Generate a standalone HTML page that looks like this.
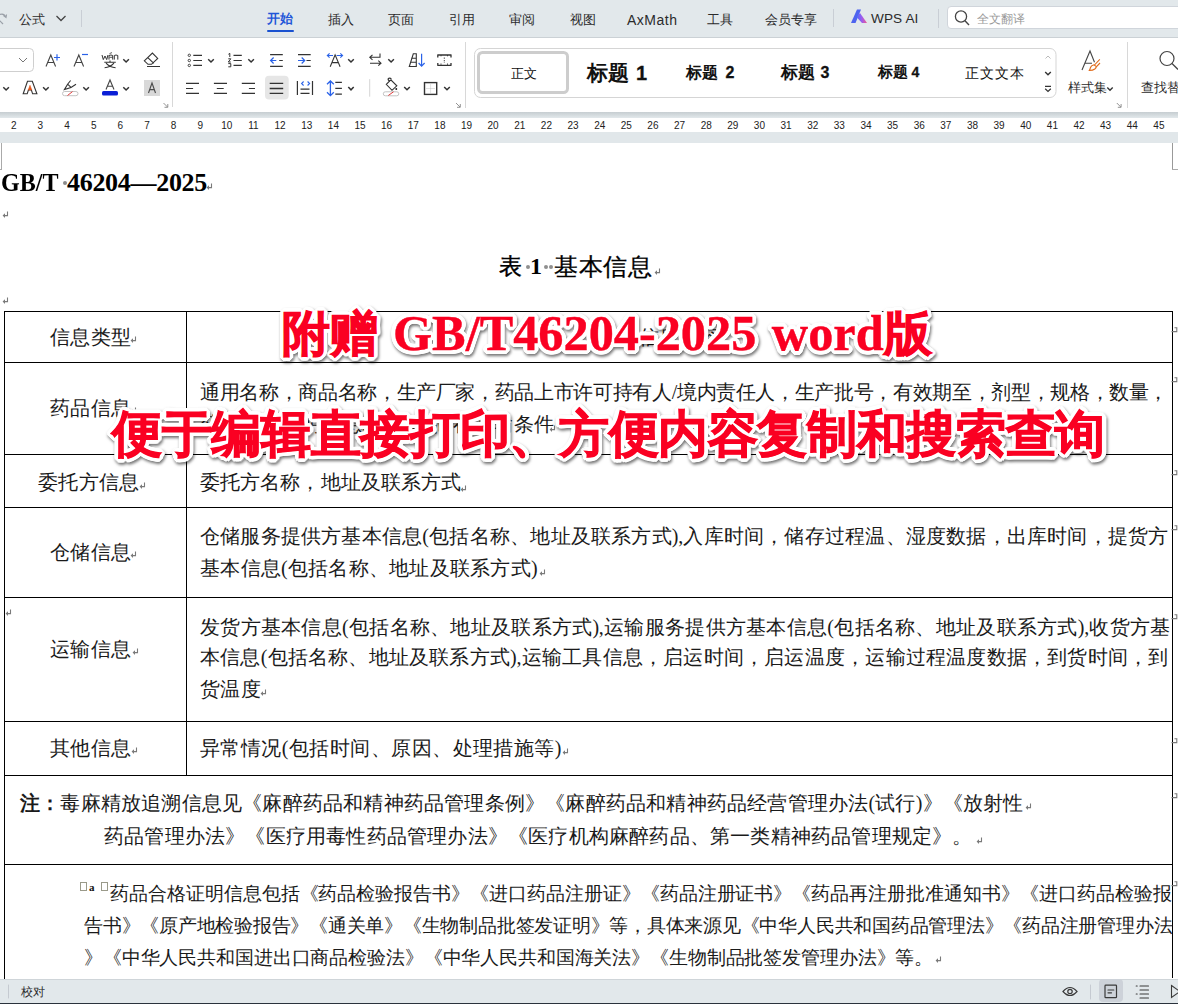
<!DOCTYPE html>
<html><head><meta charset="utf-8">
<style>
*{margin:0;padding:0;box-sizing:border-box}
html,body{width:1178px;height:1004px;overflow:hidden;background:#fff;font-family:"Liberation Sans",sans-serif}
.a{position:absolute}
#top{left:0;top:0;width:1178px;height:38px;background:#e2e8eb;border-bottom:1px solid #cbd1d5}
#rib{left:0;top:38px;width:1178px;height:74px;background:#fff}
#s1{left:0;top:112px;width:1178px;height:6px;background:linear-gradient(#c6cdd1,#e2e8eb)}
#ruler{left:0;top:118px;width:1178px;height:14px;background:#fff}
#s2{left:0;top:132px;width:1178px;height:11px;background:#e1e7ea}
#doc{left:0;top:143px;width:1178px;height:835px;background:#fff}
#status{left:0;top:979px;width:1178px;height:24px;background:#e2e8eb;border-top:1px solid #cfd5d9}
.tab{position:absolute;top:10.5px;font-size:13px;color:#2b2b2b;line-height:18px;white-space:nowrap}
.rn{position:absolute;top:118.5px;font-size:10px;color:#222;line-height:14px;width:20px;text-align:center;margin-left:0.8px}
.cjk{font-family:"Liberation Serif",serif}
.t{position:absolute;font-family:"Liberation Serif",serif;font-size:19.5px;color:#1a1a1a;line-height:22px;white-space:nowrap}
.j{text-align:justify;text-align-last:justify}
.hl{position:absolute;background:#000}
.rm{position:absolute;font-size:10px;color:#777;font-family:"Liberation Sans",sans-serif}
.ov{position:absolute;font-family:"Liberation Serif",serif;font-weight:bold;white-space:nowrap;line-height:60px}
.ovb{color:#fff;-webkit-text-stroke:1px #fff;text-shadow:4.20px 0.00px 0 #fff,3.99px 1.30px 0 #fff,3.40px 2.47px 0 #fff,2.47px 3.40px 0 #fff,1.30px 3.99px 0 #fff,0.00px 4.20px 0 #fff,-1.30px 3.99px 0 #fff,-2.47px 3.40px 0 #fff,-3.40px 2.47px 0 #fff,-3.99px 1.30px 0 #fff,-4.20px 0.00px 0 #fff,-3.99px -1.30px 0 #fff,-3.40px -2.47px 0 #fff,-2.47px -3.40px 0 #fff,-1.30px -3.99px 0 #fff,-0.00px -4.20px 0 #fff,1.30px -3.99px 0 #fff,2.47px -3.40px 0 #fff,3.40px -2.47px 0 #fff,3.99px -1.30px 0 #fff,2.50px 0.00px 0 #fff,2.02px 1.47px 0 #fff,0.77px 2.38px 0 #fff,-0.77px 2.38px 0 #fff,-2.02px 1.47px 0 #fff,-2.50px 0.00px 0 #fff,-2.02px -1.47px 0 #fff,-0.77px -2.38px 0 #fff,0.77px -2.38px 0 #fff,2.02px -1.47px 0 #fff;filter:drop-shadow(1px 2px 1.8px rgba(0,0,0,.55))}
.ovf{color:#fa0022;-webkit-text-stroke:1px #fa0022}
.ovf span{-webkit-text-stroke:0.4px #fa0022}
</style></head><body>
<div id="top" class="a"></div>
<div id="rib" class="a"></div>
<div id="s1" class="a"></div>
<div id="ruler" class="a"></div>
<div id="s2" class="a"></div>
<div id="doc" class="a"></div>
<div id="status" class="a"></div>

<!-- top bar -->
<div class="tab" style="left:19px">公式</div>
<div class="tab" style="left:267px;top:10px;color:#1f56d8;font-weight:bold">开始</div>
<div class="a" style="left:267px;top:30px;width:27px;height:2px;background:#1a52d0;border-radius:1px"></div>
<div class="tab" style="left:328px">插入</div>
<div class="tab" style="left:388px">页面</div>
<div class="tab" style="left:449px">引用</div>
<div class="tab" style="left:509px">审阅</div>
<div class="tab" style="left:570px">视图</div>
<div class="tab" style="left:627px;font-size:14px;top:11px;letter-spacing:0.5px">AxMath</div>
<div class="tab" style="left:707px">工具</div>
<div class="tab" style="left:765px">会员专享</div>
<div class="tab" style="left:871px;font-size:13.6px;top:10px;letter-spacing:0.1px">WPS AI</div>
<div class="a" style="left:947px;top:6px;width:240px;height:23px;background:#fff;border:1px solid #d0d5db;border-radius:4px"></div>
<div class="tab" style="left:977px;top:9.5px;color:#999;font-size:12px">全文翻译</div>
<svg class="a" style="left:0;top:0" width="1178" height="112" viewBox="0 0 1178 112">
<g fill="none" stroke="#333" stroke-width="1.2" stroke-linecap="butt" stroke-linejoin="miter">
<!-- top bar -->
<path d="M0 14.5 Q4 13 5.5 17 M3.5 15.5 L6 17.5 L6.5 14.5" stroke="#9aa0a8"/>
<path d="M-1 20 L3 24" stroke="#9aa0a8"/>
<path d="M56.5 16 L61 20.5 L65.5 16" stroke="#444" stroke-width="1.3"/>
<path d="M81.5 10 V27 M833.5 9 V27 M938.5 9 V28" stroke="#c9ced5" stroke-width="1"/>
<circle cx="961" cy="16.5" r="5.6" stroke="#444" stroke-width="1.3"/>
<path d="M965 20.8 L969 25" stroke="#444" stroke-width="1.4"/>
<!-- font group row1 -->
<rect x="-6" y="48.5" width="39.5" height="23" rx="4" stroke="#cfcfcf" stroke-width="1"/>
<path d="M19 58 L23 62 L27 58" stroke="#777" stroke-width="1"/>
<path d="M46 66.5 L50.8 55 L55.6 66.5 M47.6 62.5 H54" stroke="#444" stroke-width="1.1"/>
<path d="M54 57.5 H60 M57 54.3 V60.5" stroke="#2a62e8" stroke-width="1.2"/>
<path d="M74 66.5 L78.8 55 L83.6 66.5 M75.6 62.5 H82" stroke="#444" stroke-width="1.1"/>
<path d="M82 54.5 H88" stroke="#2a62e8" stroke-width="1.2"/>
<path d="M102 55 L103.3 59.6 L105 56 L106.7 59.6 L108 55 M109 59.6 V55.5 Q111 54.5 112.7 55.5 V59.6 M114.3 59.6 V55.5 Q116 54.5 117.8 55.5 V59.6" stroke-width="1"/>
<path d="M109.5 53.6 L112 52.6 M109.5 57.3 H112.7" stroke-width="0.8"/>
<path d="M104.3 62.3 H115.8 M110 60.5 V62 M106 63.2 Q110 67.5 115.6 67.8 M114 63.2 Q110 67.5 104.6 67.8" stroke-width="1.1"/>
<path d="M123.3 59.3 L126.1 62 L128.9 59.3" stroke-width="1.5"/>
<path d="M144.3 60.8 L152.4 53 L157.7 58.4 L151.5 64.3 H148 Z M147.8 57.6 L153.8 63.4 M147 66.5 H160" stroke-width="1.1"/>
<!-- font group row2 -->
<path d="M3.3 87.2 L6.1 90 L8.9 87.2" stroke-width="1.5"/>
<path d="M23.2 93.8 L27.5 81.2 H32.3 L36.9 93.8 H32.6 L31.4 90 H28.4 L27.2 93.8 Z" stroke-width="1.1"/>
<path d="M28.2 90 L30 85.2 L31.8 90 Z" fill="#e0561c" stroke="#e0561c" stroke-width="0.5"/>
<path d="M43.1 87.2 L45.9 90 L48.7 87.2" stroke-width="1.5"/>
<path d="M70.6 80.5 L67.6 84.2 L64.4 89.6 L71 87.4 L76 84.2 M67.6 84.2 L71 87.4" stroke-width="1.1"/>
<rect x="62.5" y="91.5" width="15.5" height="4.2" rx="2.1" stroke="#c4c4c4" stroke-width="1"/>
<path d="M67.5 95.5 L72.5 91.6" stroke="#e23c3c" stroke-width="1"/>
<path d="M83.3 87.2 L86.1 90 L88.9 87.2" stroke-width="1.5"/>
<path d="M106 89.5 L110 80 L114 89.5 M107.4 86.3 H112.6" stroke="#444" stroke-width="1.1"/>
<rect x="102" y="91" width="16" height="4.6" rx="1.6" fill="#0a1fd6" stroke="none"/>
<path d="M123.3 87.2 L126.1 90 L128.9 87.2" stroke-width="1.5"/>
<rect x="144" y="80" width="16" height="16" fill="#d9d9d9" stroke="none"/>
<path d="M148.5 93 L152 83 L155.5 93 M149.6 89.6 H154.4" stroke="#4a4a4a" stroke-width="1.1"/>
<path d="M163.5 103 L167.5 107 M164.5 107.3 H167.8 V104" stroke="#888" stroke-width="0.9"/>
<path d="M172.5 42 V107 M465.5 42 V108 M1127.5 42 V108" stroke="#d8d8d8" stroke-width="1"/>
<!-- para row1 -->
<circle cx="189.3" cy="55.3" r="1.2" stroke-width="0.9"/><circle cx="189.3" cy="60.5" r="1.2" stroke-width="0.9"/><circle cx="189.3" cy="65.4" r="1.2" stroke-width="0.9"/>
<path d="M193.3 55.3 H202 M193.3 60.5 H202 M193.3 65.4 H202"/>
<path d="M208.2 59.3 L211 62 L213.8 59.3" stroke-width="1.5"/>
<path d="M228.4 54.3 L229.8 53.3 V57 M228.3 58.8 H230.8 L228.3 62 H230.8 M228.3 63.6 H230.8 V66.8 H228.3" stroke-width="1"/>
<path d="M233.5 55.3 H241.8 M233.5 60.5 H241.8 M233.5 65.4 H241.8"/>
<path d="M248.3 59.3 L251.1 62 L253.9 59.3" stroke-width="1.5"/>
<path d="M270.1 54.6 H282.8 M270.1 66.4 H282.8 M279.2 60.5 H282.8"/>
<path d="M270.8 60.5 H276.3 M273.6 57.5 L270.6 60.5 L273.6 63.5" stroke="#2a62e8" stroke-width="1.2"/>
<path d="M298 54.6 H310.7 M298 66.4 H310.7 M306.5 60.5 H310.7"/>
<path d="M298 60.5 H304.5 M301.7 57.5 L304.7 60.5 L301.7 63.5" stroke="#2a62e8" stroke-width="1.2"/>
<path d="M330.2 66.8 L335.1 54.9 L340.1 66.8 M331.8 62.6 H338.4" stroke-width="1.1"/>
<path d="M327.3 55.5 H333 M329.6 53.3 L327.3 55.5 L329.6 57.7 M336.6 55.5 H342.6 M340.3 53.3 L342.6 55.5 L340.3 57.7" stroke="#2a62e8" stroke-width="1.1"/>
<path d="M348.2 59.3 L351 62 L353.8 59.3" stroke-width="1.5"/>
<path d="M380 53.5 V57.3 H370 M372.5 54.8 L369.8 57.3 L372.5 59.8 M370 63.2 H380.8 M378.3 60.7 L381 63.2 L378.3 65.7" stroke-width="1.1"/>
<path d="M388.3 59.3 L391.1 62 L393.9 59.3" stroke-width="1.5"/>
<path d="M409.3 66.5 L413.3 53.8 H416.3 V66.5 Z M411.2 58.3 H416.3 M410.2 62.3 H416.3" stroke-width="1.1"/>
<path d="M421.6 53.8 V66 M418.6 63 L421.6 66.2 L424.6 63" stroke="#2a62e8" stroke-width="1.2"/>
<path d="M437.3 55 H451.5 M437.3 65.3 H451.5 M437.8 55 V57.5 M451 55 V57.5 M437.8 63 V65.3 M451 63 V65.3" stroke-width="1.3"/>
<path d="M441 55 V56.8 M447.5 55 V56.8 M441 63.5 V65.3 M447.5 63.5 V65.3 M444.3 57.5 V63" stroke-width="0.9" stroke-dasharray="1.3 1.2"/>
<!-- para row2 -->
<path d="M186 83.3 H199 M186 88.5 H193.1 M186 93.4 H199"/>
<path d="M213.9 83.3 H227 M216.8 88.5 H223.7 M213.9 93.4 H227"/>
<path d="M241.8 83.3 H255 M248.9 88.5 H255 M241.8 93.4 H255"/>
<rect x="265" y="75.8" width="23.7" height="23.8" rx="4" fill="#e6e6e6" stroke="none"/>
<path d="M269.7 83.3 H283.2 M269.7 88.5 H283.2 M269.7 93.4 H283.2" stroke-width="1.3"/>
<path d="M297.4 81 V95 M312.5 81 V95 M300.5 89.2 H309.5 M300.5 93.4 H309.5" stroke-width="1.2"/>
<path d="M303.6 81.5 L301.6 83.5 L303.6 85.5 M307.6 81.5 L309.6 83.5 L307.6 85.5" stroke="#2a62e8" stroke-width="1.1"/>
<path d="M330.4 81.3 V95.3 M327 84.3 L330.4 81 L333.8 84.3 M327 92.3 L330.4 95.6 L333.8 92.3" stroke="#2a62e8" stroke-width="1.3"/>
<path d="M335.3 82.3 H341.9 M335.3 88.3 H341.9 M335.3 94.1 H341.9" stroke-width="1.2"/>
<path d="M348.3 87 L351 89.8 L353.7 87" stroke-width="1.5"/>
<path d="M369.7 79.1 V96.7" stroke="#d6d6d6" stroke-width="1"/>
<path d="M386.3 84.3 L390.8 79.8 L396.8 85.8 L392 90.3 Z M390 81.5 Q387.5 80 388.3 78.5 Q390 77.3 391.5 79.3" stroke-width="1.1"/>
<path d="M396.3 88 V90" stroke-width="1.6"/>
<rect x="383.3" y="91.8" width="15.5" height="4" rx="2" stroke="#c4c4c4" stroke-width="1"/>
<path d="M388.3 95.5 L393.5 91.8" stroke="#e23c3c" stroke-width="1"/>
<path d="M404.2 87 L407 89.8 L409.8 87" stroke-width="1.5"/>
<rect x="424.5" y="82.6" width="12.2" height="11.8" stroke-width="1.4"/>
<path d="M430.6 84.5 V93 M426.5 88.5 H435" stroke="#aaa" stroke-width="0.7" stroke-dasharray="1 1"/>
<path d="M444.2 87 L447 89.8 L449.8 87" stroke-width="1.5"/>
<path d="M456 103 L460 107 M457 107.3 H460.3 V104" stroke="#888" stroke-width="0.9"/>
<!-- styles -->
<rect x="474.5" y="48.5" width="581.5" height="49" rx="6" stroke="#d5d5d5" stroke-width="1"/>
<rect x="478.5" y="52.5" width="89" height="40" rx="4" stroke="#cdcdcd" stroke-width="3"/>
<path d="M1045.5 58.5 L1048 56 L1050.5 58.5" stroke="#bbb" stroke-width="1"/>
<path d="M1045.2 72 L1048 74.7 L1050.8 72" stroke="#333" stroke-width="1.4"/>
<path d="M1045 86.3 H1051 M1045.2 88.8 L1048 91.5 L1050.8 88.8" stroke="#333" stroke-width="1.2"/>
<path d="M1082 70 L1090 51 L1094.5 62.3 M1084.8 63.3 H1092" stroke="#444" stroke-width="1.1"/>
<path d="M1094.5 65 L1099.8 59.3 M1096.3 66.8 L1100 63" stroke="#e06c1c" stroke-width="1.1"/><path d="M1094 64.8 Q1091 65.5 1090.5 67.5 Q1090 69.5 1089.3 70.5 Q1093 70.5 1094.8 69 Q1096.5 67.5 1096.3 66.5 Z" stroke="#e06c1c" stroke-width="1.1" fill="none"/>
<path d="M1107.3 87.5 L1110 90.2 L1112.7 87.5" stroke-width="1.4"/>
<path d="M1116.8 103 L1120.8 107 M1117.8 107.3 H1121.1 V104" stroke="#888" stroke-width="0.9"/>
<circle cx="1167" cy="58.5" r="7" stroke="#444" stroke-width="1.2"/>
<path d="M1172 63.5 L1178 69.5" stroke="#444" stroke-width="1.3"/>
</g>
<defs><linearGradient id="wg" x1="0" y1="0" x2="1" y2="0"><stop offset="0" stop-color="#4b6cf7"/><stop offset="0.5" stop-color="#9b5cf0"/><stop offset="1" stop-color="#f25a8c"/></linearGradient></defs>
<path d="M851 23 L857 9.5 H861 L855.5 23 Z" fill="#4d63ef"/>
<path d="M856.5 17 L860 13 L867 23 H862 Z" fill="url(#wg)"/>
</svg>



<div class="tab" style="left:511px;top:65px;font-size:13px;color:#111">正文</div>
<div class="a cjk" style="left:587px;top:61px;font-size:21px;line-height:24px;font-weight:bold;color:#111;white-space:nowrap">标题</div><div style="left:636px;top:61px;font-size:20px;line-height:24px;font-family:'Liberation Sans',sans-serif;font-weight:bold;color:#111;position:absolute;-webkit-text-stroke:0.3px #111">1</div>
<div class="a cjk" style="left:686px;top:63px;font-size:16px;line-height:20px;font-weight:bold;color:#111;white-space:nowrap">标题</div><div style="left:725.5px;top:62.5px;font-size:16px;line-height:20px;font-family:'Liberation Sans',sans-serif;font-weight:bold;color:#111;position:absolute;-webkit-text-stroke:0.3px #111">2</div>
<div class="a cjk" style="left:781px;top:63px;font-size:16.5px;line-height:20px;font-weight:bold;color:#111;white-space:nowrap">标题</div><div style="left:820.5px;top:62.5px;font-size:16px;line-height:20px;font-family:'Liberation Sans',sans-serif;font-weight:bold;color:#111;position:absolute;-webkit-text-stroke:0.3px #111">3</div>
<div class="a cjk" style="left:878px;top:63px;font-size:14.5px;line-height:18px;font-weight:bold;color:#111;white-space:nowrap">标题</div><div style="left:911.5px;top:63px;font-size:14px;line-height:18px;font-family:'Liberation Sans',sans-serif;font-weight:bold;color:#111;position:absolute;-webkit-text-stroke:0.3px #111">4</div>
<div class="a cjk" style="left:965px;top:63.5px;font-size:14.4px;line-height:18px;color:#111;white-space:nowrap;letter-spacing:1px">正文文本</div>
<div class="tab" style="left:1068px;top:79px;font-size:12.5px;letter-spacing:0.1px">样式集</div>
<div class="tab" style="left:1141px;top:79px;font-size:13px">查找替换</div>

<!-- ruler numbers -->
<div class="rn" style="left:3.0px">2</div><div class="rn" style="left:29.6px">3</div><div class="rn" style="left:56.3px">4</div><div class="rn" style="left:82.9px">5</div><div class="rn" style="left:109.5px">6</div><div class="rn" style="left:136.2px">7</div><div class="rn" style="left:162.8px">8</div><div class="rn" style="left:189.4px">9</div><div class="rn" style="left:216.0px">10</div><div class="rn" style="left:242.7px">11</div><div class="rn" style="left:269.3px">12</div><div class="rn" style="left:295.9px">13</div><div class="rn" style="left:322.6px">14</div><div class="rn" style="left:349.2px">15</div><div class="rn" style="left:375.8px">16</div><div class="rn" style="left:402.4px">17</div><div class="rn" style="left:429.1px">18</div><div class="rn" style="left:455.7px">19</div><div class="rn" style="left:482.3px">20</div><div class="rn" style="left:509.0px">21</div><div class="rn" style="left:535.6px">22</div><div class="rn" style="left:562.2px">23</div><div class="rn" style="left:588.9px">24</div><div class="rn" style="left:615.5px">25</div><div class="rn" style="left:642.1px">26</div><div class="rn" style="left:668.8px">27</div><div class="rn" style="left:695.4px">28</div><div class="rn" style="left:722.0px">29</div><div class="rn" style="left:748.6px">30</div><div class="rn" style="left:775.3px">31</div><div class="rn" style="left:801.9px">32</div><div class="rn" style="left:828.5px">33</div><div class="rn" style="left:855.2px">34</div><div class="rn" style="left:881.8px">35</div><div class="rn" style="left:908.4px">36</div><div class="rn" style="left:935.0px">37</div><div class="rn" style="left:961.7px">38</div><div class="rn" style="left:988.3px">39</div><div class="rn" style="left:1014.9000000000001px">40</div><div class="rn" style="left:1041.6px">41</div><div class="rn" style="left:1068.2px">42</div><div class="rn" style="left:1094.8px">43</div><div class="rn" style="left:1121.5px">44</div><div class="rn" style="left:1148.1px">45</div>


<!-- document -->
<div class="a" style="left:1px;top:143px;width:1px;height:27px;background:#aaa"></div><div class="a" style="left:0px;top:169px;width:1px;height:1px;background:#aaa"></div>
<div class="a" style="left:1172px;top:143px;width:1px;height:27px;background:#999"></div><div class="a" style="left:1172px;top:169px;width:6px;height:1px;background:#aaa"></div>
<div class="a" style="left:1px;top:168px;font-family:'Liberation Serif',serif;font-weight:bold;font-size:26px;line-height:30px;color:#000;white-space:nowrap;transform:scaleX(0.925);transform-origin:0 0">GB/T</div>
<div class="a" style="left:62.5px;top:180.5px;width:4px;height:4px;border-radius:2px;background:#8a8a8a"></div>
<div class="a" style="left:67px;top:168px;font-family:'Liberation Serif',serif;font-weight:bold;font-size:26px;line-height:30px;color:#000;white-space:nowrap;letter-spacing:-0.3px">46204—2025</div>

<div class="t" style="left:499px;top:255px;font-size:23px;line-height:24px;color:#000;-webkit-text-stroke:0.4px #000">表</div>
<div class="a" style="left:525.5px;top:264.5px;width:4px;height:4px;border-radius:2px;background:#8f8f8f"></div>
<div class="a" style="left:530px;top:252px;font-family:'Liberation Serif',serif;font-weight:bold;font-size:24px;line-height:28px;color:#000">1</div>
<div class="a" style="left:543.5px;top:264.5px;width:4px;height:4px;border-radius:2px;background:#8f8f8f"></div>
<div class="a" style="left:548.5px;top:264.5px;width:4px;height:4px;border-radius:2px;background:#8f8f8f"></div>
<div class="t" style="left:554px;top:255px;font-size:24px;line-height:24px;color:#000;letter-spacing:0.6px;-webkit-text-stroke:0.3px #000">基本信息</div>

<!-- table lines -->
<div class="hl" style="left:4px;top:311px;width:1169px;height:1px"></div>
<div class="hl" style="left:4px;top:362px;width:1169px;height:1px"></div>
<div class="hl" style="left:4px;top:454px;width:1169px;height:1px"></div>
<div class="hl" style="left:4px;top:507px;width:1169px;height:1px"></div>
<div class="hl" style="left:4px;top:597px;width:1169px;height:1px"></div>
<div class="hl" style="left:4px;top:721px;width:1169px;height:1px"></div>
<div class="hl" style="left:4px;top:775px;width:1169px;height:1px"></div>
<div class="hl" style="left:4px;top:864px;width:1169px;height:1px"></div>
<div class="hl" style="left:4px;top:311px;width:1px;height:668px"></div>
<div class="hl" style="left:186px;top:311px;width:1px;height:465px"></div>
<div class="hl" style="left:1172px;top:311px;width:1px;height:667px"></div>

<!-- left column -->
<div class="t" style="left:50px;top:326.2px;font-size:20px;letter-spacing:0.3px">信息类型</div>
<div class="t" style="left:50px;top:397.2px;font-size:20px;letter-spacing:0.3px">药品信息</div>
<div class="t" style="left:38px;top:471.0px;font-size:20px;letter-spacing:0.3px">委托方信息</div>
<div class="t" style="left:50px;top:540.8px;font-size:20px;letter-spacing:0.3px">仓储信息</div>
<div class="t" style="left:50px;top:638.3px;font-size:20px;letter-spacing:0.3px">运输信息</div>
<div class="t" style="left:50px;top:737.0px;font-size:20px;letter-spacing:0.3px">其他信息</div>
<div class="t" style="left:639px;top:326.2px;font-size:20px;letter-spacing:0.3px">信息内容</div>
<div class="t j" style="left:200px;top:380.8px;font-size:20px;letter-spacing:-0.5px;width:968px">通用名称，商品名称，生产厂家，药品上市许可持有人/境内责任人，生产批号，有效期至，剂型，规格，数量，</div>
<div class="t" style="left:200px;top:413.2px;font-size:20px;letter-spacing:0.3px">药品合格证明信息a，药品储存运输条件</div>
<div class="t" style="left:200px;top:471.4px;font-size:20px;letter-spacing:0.1px">委托方名称，地址及联系方式</div>
<div class="t j" style="left:200px;top:524.5px;font-size:20px;letter-spacing:-0.3px;width:968px">仓储服务提供方基本信息(包括名称、地址及联系方式),入库时间，储存过程温、湿度数据，出库时间，提货方</div>
<div class="t" style="left:200px;top:556.9px;font-size:20px;letter-spacing:0.25px">基本信息(包括名称、地址及联系方式)</div>
<div class="t j" style="left:200px;top:615.8px;font-size:20px;letter-spacing:-0.3px;width:970px">发货方基本信息(包括名称、地址及联系方式),运输服务提供方基本信息(包括名称、地址及联系方式),收货方基</div>
<div class="t j" style="left:200px;top:646.2px;font-size:20px;letter-spacing:-0.3px;width:968px">本信息(包括名称、地址及联系方式),运输工具信息，启运时间，启运温度，运输过程温度数据，到货时间，到</div>
<div class="t" style="left:200px;top:678.1px;font-size:20px;letter-spacing:0.3px">货温度</div>
<div class="t" style="left:200px;top:737.0px;font-size:20px;letter-spacing:0.45px">异常情况(包括时间、原因、处理措施等)</div>
<div class="t" style="left:20px;top:792.0px;font-size:20px;letter-spacing:0.2px"><b>注：</b>毒麻精放追溯信息见《麻醉药品和精神药品管理条例》《麻醉药品和精神药品经营管理办法(试行)》《放射性</div>
<div class="t" style="left:104px;top:824.7px;font-size:20px;letter-spacing:0.2px">药品管理办法》《医疗用毒性药品管理办法》《医疗机构麻醉药品、第一类精神药品管理规定》。</div>
<div class="t j" style="left:110px;top:882.5px;font-size:19px;letter-spacing:-0.5px;width:1061px">药品合格证明信息包括《药品检验报告书》《进口药品注册证》《药品注册证书》《药品再注册批准通知书》《进口药品检验报</div>
<div class="t j" style="left:84px;top:914.7px;font-size:19px;letter-spacing:-0.5px;width:1088px">告书》《原产地检验报告》《通关单》《生物制品批签发证明》等，具体来源见《中华人民共和国药品管理法》《药品注册管理办法</div>
<div class="t" style="left:84px;top:947.1px;font-size:19px;letter-spacing:-0.13px">》《中华人民共和国进出口商品检验法》《中华人民共和国海关法》《生物制品批签发管理办法》等。</div>
<!-- fn prefix -->
<div class="a" style="left:80px;top:882px;width:7px;height:9px;border:1px solid #9a9a8a"></div>
<div class="a" style="left:89px;top:880px;font-family:'Liberation Serif',serif;font-weight:bold;font-size:11px;line-height:14px;color:#111">a</div>
<div class="a" style="left:101px;top:882px;width:7px;height:9px;border:1px solid #9a9a8a"></div>

<!-- marks -->
<svg class="a" style="left:0;top:0" width="1178" height="1004"><g stroke="#7a7a7a" stroke-width="1.1"><path d="M211.5 183.5 V187.6 H208" fill="none"/><path d="M206.6 187.6 L209 185.2 L209 190 Z" fill="#7a7a7a" stroke="none"/><path d="M7.5 211.5 V215.6 H4" fill="none"/><path d="M2.6 215.6 L5 213.2 L5 218 Z" fill="#7a7a7a" stroke="none"/><path d="M659.5 268.5 V272.6 H656" fill="none"/><path d="M654.6 272.6 L657 270.2 L657 275 Z" fill="#7a7a7a" stroke="none"/><path d="M7.5 297.5 V301.6 H4" fill="none"/><path d="M2.6 301.6 L5 299.2 L5 304 Z" fill="#7a7a7a" stroke="none"/><path d="M135.5 336.5 V340.6 H132" fill="none"/><path d="M130.6 340.6 L133 338.2 L133 343 Z" fill="#7a7a7a" stroke="none"/><path d="M135.5 407.5 V411.6 H132" fill="none"/><path d="M130.6 411.6 L133 409.2 L133 414 Z" fill="#7a7a7a" stroke="none"/><path d="M144.5 482.5 V486.6 H141" fill="none"/><path d="M139.6 486.6 L142 484.2 L142 489 Z" fill="#7a7a7a" stroke="none"/><path d="M554.5 425.5 V429.6 H551" fill="none"/><path d="M549.6 429.6 L552 427.2 L552 432 Z" fill="#7a7a7a" stroke="none"/><path d="M465.5 485.5 V489.6 H462" fill="none"/><path d="M460.6 489.6 L463 487.2 L463 492 Z" fill="#7a7a7a" stroke="none"/><path d="M135.5 551.5 V555.6 H132" fill="none"/><path d="M130.6 555.6 L133 553.2 L133 558 Z" fill="#7a7a7a" stroke="none"/><path d="M544.5 569.5 V573.6 H541" fill="none"/><path d="M539.6 573.6 L542 571.2 L542 576 Z" fill="#7a7a7a" stroke="none"/><path d="M10.5 609.5 V613.6 H7" fill="none"/><path d="M5.6 613.6 L8 611.2 L8 616 Z" fill="#7a7a7a" stroke="none"/><path d="M137.5 648.5 V652.6 H134" fill="none"/><path d="M132.6 652.6 L135 650.2 L135 655 Z" fill="#7a7a7a" stroke="none"/><path d="M265.5 689.5 V693.6 H262" fill="none"/><path d="M260.6 693.6 L263 691.2 L263 696 Z" fill="#7a7a7a" stroke="none"/><path d="M136.5 747.5 V751.6 H133" fill="none"/><path d="M131.6 751.6 L134 749.2 L134 754 Z" fill="#7a7a7a" stroke="none"/><path d="M567.5 748.5 V752.6 H564" fill="none"/><path d="M562.6 752.6 L565 750.2 L565 755 Z" fill="#7a7a7a" stroke="none"/><path d="M1030.5 803.5 V807.6 H1027" fill="none"/><path d="M1025.6 807.6 L1028 805.2 L1028 810 Z" fill="#7a7a7a" stroke="none"/><path d="M981.5 837.5 V841.6 H978" fill="none"/><path d="M976.6 841.6 L979 839.2 L979 844 Z" fill="#7a7a7a" stroke="none"/><path d="M940.5 956.5 V960.6 H937" fill="none"/><path d="M935.6 960.6 L938 958.2 L938 963 Z" fill="#7a7a7a" stroke="none"/><path d="M1171.5 331.6 H1176.8 V327.8 H1174.5" fill="none"/><path d="M1171.5 381.6 H1176.8 V377.8 H1174.5" fill="none"/><path d="M1171.5 474.6 H1176.8 V470.8 H1174.5" fill="none"/><path d="M1171.5 529.6 H1176.8 V525.8 H1174.5" fill="none"/><path d="M1171.5 618.6 H1176.8 V614.8 H1174.5" fill="none"/><path d="M1171.5 742.6 H1176.8 V738.8 H1174.5" fill="none"/><path d="M1171.5 797.6 H1176.8 V793.8 H1174.5" fill="none"/><path d="M1171.5 885.6 H1176.8 V881.8 H1174.5" fill="none"/></g></svg>
<!-- overlay -->
<div class="ov ovb" style="left:282px;top:303px;font-size:48px;word-spacing:3px">附赠 <span style="font-size:50.3px">GB/T46204-2025 word</span>版</div>
<div class="ov ovf" style="left:282px;top:303px;font-size:48px;word-spacing:3px">附赠 <span style="font-size:50.3px">GB/T46204-2025 word</span>版</div>
<div class="ov ovb" style="left:112px;top:405px;font-size:49.6px;letter-spacing:-0.35px">便于编辑直接打印、方便内容复制和搜索查询</div>
<div class="ov ovf" style="left:112px;top:405px;font-size:49.6px;letter-spacing:-0.35px">便于编辑直接打印、方便内容复制和搜索查询</div>
<!-- status -->
<div class="a" style="left:0;top:1003px;width:1178px;height:1px;background:#2a323c"></div>
<div class="a" style="left:1099px;top:979px;width:24px;height:23px;background:#cdd2d9;border-radius:4px"></div>
<svg class="a" style="left:0;top:979px" width="1178" height="26"><g fill="none" stroke="#3a3a3a" stroke-width="1.2" stroke-linecap="round">
<path d="M8.5 6 V19" stroke="#c5cad1" stroke-width="1"/>
<path d="M1090.5 6 V20" stroke="#c5cad1" stroke-width="1"/>
<path d="M1063 12.5 Q1070 4.5 1077 12.5 Q1070 20.5 1063 12.5 Z"/>
<circle cx="1070" cy="12.5" r="2.2"/>
<rect x="1105" y="6.2" width="11.5" height="12.5" rx="0.8"/>
<path d="M1108 11 H1113.8 M1108 13.8 H1111.5"/>
<path d="M1140 7 H1148.5 M1140 11 H1148.5 M1140 15 H1148.5 M1140 19 H1148.5 M1136.2 7 H1137.2 M1136.2 15 H1137.2" stroke-width="1.1"/>
<path d="M1171.5 6.5 L1180 12.5 L1171.5 18.5 Z" stroke-width="1.1"/>
</g></svg>

<div class="tab" style="left:21px;top:983px;font-size:12px">校对</div>
</body></html>
